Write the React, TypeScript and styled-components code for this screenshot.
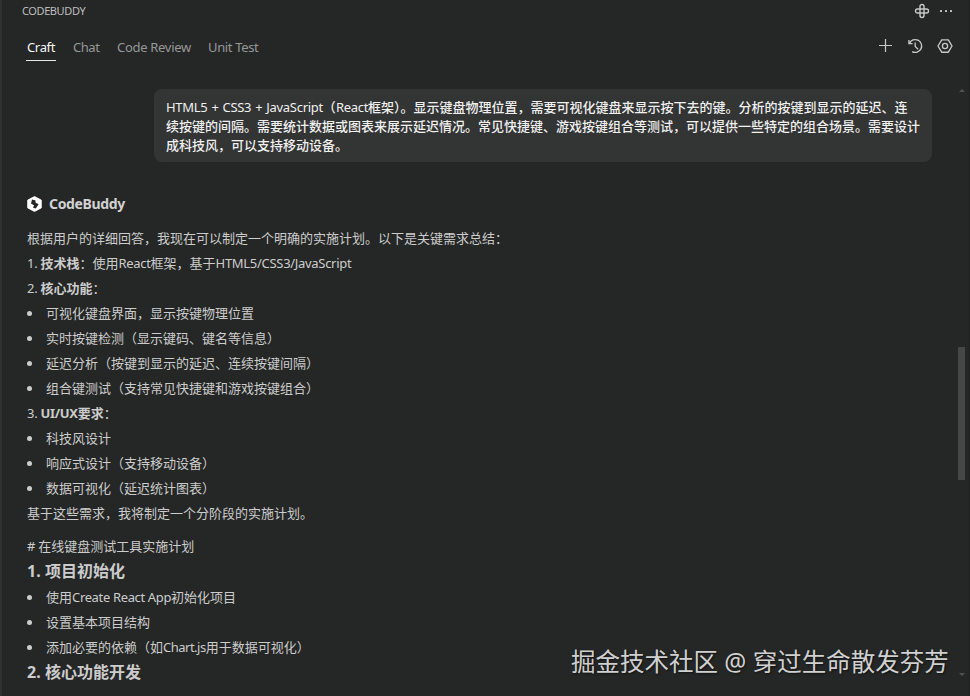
import React from "react";
import styled, { createGlobalStyle } from "styled-components";

const GlobalStyle = createGlobalStyle`
  * { box-sizing: border-box; }
  body { margin: 0; background: #252726; overflow: hidden; }
`;

const Panel = styled.div`
  position: relative;
  width: 970px;
  height: 696px;
  display: flex;
  flex-direction: column;
  overflow: hidden;
  background: #252726;
  border-left: 2px solid #303231;
  border-right: 1px solid #1e201f;
  color: #cccccc;
  font: 13px/25px "Noto Sans", "Noto Sans CJK SC", sans-serif;
  white-space: nowrap;
`;

const TitleBar = styled.header`
  height: 22px;
  display: flex;
  align-items: center;
  justify-content: space-between;
  padding: 0 16px 0 20px;
  font-size: 11px;
  line-height: 22px;
`;

const Title = styled.span`
  color: #bdbdbd;
  letter-spacing: -0.4px;
`;

const Actions = styled.div<{ $gap: number }>`
  display: flex;
  align-items: center;
  gap: ${(p) => p.$gap}px;
  color: #c8c8c8;
  svg { display: block; }
`;

const TabBar = styled.nav`
  height: 48px;
  display: flex;
  align-items: center;
  justify-content: space-between;
  padding: 0 16px 0 24px;
`;

const Tabs = styled.div`
  display: flex;
  gap: 16px;
  padding-top: 2px;
`;

const Tab = styled.span<{ $active?: boolean; $width: number; $track: number }>`
  width: ${(p) => p.$width}px;
  height: 27px;
  padding-left: 1px;
  line-height: 27px;
  letter-spacing: ${(p) => p.$track}px;
  color: ${(p) => (p.$active ? "#f4f4f4" : "#969797")};
  border-bottom: 1px solid ${(p) => (p.$active ? "#e8e8e8" : "transparent")};
`;

const Conversation = styled.main`
  flex: 1;
  display: flex;
  flex-direction: column;
  padding: 19px 37px 0 25px;
`;

const Bubble = styled.div`
  align-self: flex-end;
  width: 778px;
  height: 73px;
  padding: 9px 12px 7px;
  border-radius: 8px;
  background: #333434;
  color: #f0f0f0;
  font-weight: 500;
  line-height: 19px;
`;

const Author = styled.div`
  display: flex;
  align-items: center;
  gap: 7px;
  height: 24px;
  margin-top: 30px;
  color: #d2d2d2;
  font-size: 14px;
  font-weight: 700;
  line-height: 24px;
`;

const Name = styled.span`
  height: 24px;
  letter-spacing: -0.35px;
`;

const Answer = styled.section<{ $top: number }>`
  margin-top: ${(p) => p.$top}px;
`;

const Line = styled.p`
  margin: 0;
  height: 25px;
`;

const Heading = styled.h3`
  margin: 0 0 1px;
  height: 25px;
  font-size: 16px;
  font-weight: 700;
  line-height: 25px;
`;

const List = styled.ul`
  margin: 0;
  padding: 0;
  list-style: none;
`;

const Item = styled.li`
  height: 25px;
  display: flex;
  align-items: center;
  &::before {
    content: "";
    width: 5px;
    height: 5px;
    margin-right: 14px;
    border-radius: 50%;
    background: #cccccc;
  }
`;

const Latin = styled.span<{ $track?: number }>`
  letter-spacing: ${(p) => p.$track ?? -0.3}px;
`;

const MessageLatin = styled(Latin)`
  font-weight: 450;
  word-spacing: 0.9px;
`;

const ScrollThumb = styled.div`
  position: absolute;
  right: 4px;
  top: 347px;
  width: 7px;
  height: 133px;
  background: #454746;
`;

const ScrollArrow = styled.div<{ $top: number; $down?: boolean }>`
  position: absolute;
  right: 4px;
  top: ${(p) => p.$top}px;
  border: 3px solid transparent;
  ${(p) => (p.$down ? "border-top" : "border-bottom")}: 3px solid #505251;
  ${(p) => (p.$down ? "border-bottom" : "border-top")}-width: 0;
`;

const Watermark = styled.div`
  position: absolute;
  left: 569px;
  top: 645px;
  font-size: 24.5px;
  line-height: 34px;
  color: #d0d0d0;
  text-shadow: 1px 1px 2px #111;
`;

const CloverIcon = () => (
  <svg width="16" height="16" viewBox="0 0 16 16" fill="none" stroke="currentColor" strokeWidth="1.4">
    <path d="M6 6V3.5a2 2 0 0 1 4 0V6h2.5a2 2 0 0 1 0 4H10v2.5a2 2 0 0 1-4 0V10H3.5a2 2 0 0 1 0-4zM6 6h4v4H6z" />
  </svg>
);

const MoreIcon = () => (
  <svg width="14" height="16" viewBox="0 0 14 16" fill="currentColor">
    <rect x="1" y="7" width="2" height="2" rx=".6" />
    <rect x="6" y="7" width="2" height="2" rx=".6" />
    <rect x="11" y="7" width="2" height="2" rx=".6" />
  </svg>
);

const PlusIcon = () => (
  <svg width="16" height="16" viewBox="0 0 16 16" stroke="currentColor" strokeWidth="1.2">
    <path d="M2 7.5h13M8.5 1v13" />
  </svg>
);

const HistoryIcon = () => (
  <svg width="16" height="16" viewBox="0 0 16 16" fill="none" stroke="currentColor" strokeWidth="1.3">
    <path d="M1.9 2v3.6H5.6M2.4 5.4A6.4 6.4 0 1 1 5.2 13.6M8.2 4.5v4l2.9 2.7" />
  </svg>
);

const SettingsIcon = () => (
  <svg width="16" height="16" viewBox="0 0 16 16" fill="none" stroke="currentColor" strokeWidth="1.35">
    <path d="M4.7 1.8h6.6L15 8l-3.7 6.2H4.7L1 8z" strokeLinejoin="round" />
    <circle cx="8" cy="8" r="2.6" />
  </svg>
);

const BuddyLogo = () => (
  <svg width="15" height="16" viewBox="0 0 15 16">
    <path d="M7.5 .5 14.3 4.1v7.8l-6.8 3.6L.7 11.9V4.1z" fill="#fff" stroke="#fff" strokeWidth=".8" strokeLinejoin="round" />
    <path d="M5 3.6 8.6 4.4 8.4 6.6 11.6 8.2 8.8 12.6 5.8 11.4 7.2 9.6 4 7.4z" fill="#252726" />
  </svg>
);

export default function App() {
  return (
    <Panel>
      <GlobalStyle />
      <TitleBar>
        <Title>CODEBUDDY</Title>
        <Actions $gap={9}>
          <CloverIcon />
          <MoreIcon />
        </Actions>
      </TitleBar>
      <TabBar>
        <Tabs>
          <Tab $active $width={30} $track={-0.35}>Craft</Tab>
          <Tab $width={28} $track={-0.45}>Chat</Tab>
          <Tab $width={75} $track={-0.3}>Code Review</Tab>
          <Tab $width={52} $track={-0.35}>Unit Test</Tab>
        </Tabs>
        <Actions $gap={14}>
          <PlusIcon />
          <HistoryIcon />
          <SettingsIcon />
        </Actions>
      </TabBar>
      <Conversation>
        <Bubble>
          <MessageLatin>HTML5 + CSS3 + JavaScript</MessageLatin>（<MessageLatin>React</MessageLatin>框架）。显示键盘物理位置，需要可视化键盘来显示按下去的键。分析的按键到显示的延迟、连
          <br />
          续按键的间隔。需要统计数据或图表来展示延迟情况。常见快捷键、游戏按键组合等测试，可以提供一些特定的组合场景。需要设计
          <br />
          成科技风，可以支持移动设备。
        </Bubble>
        <Author>
          <BuddyLogo />
          <Name>CodeBuddy</Name>
        </Author>
        <Answer $top={10}>
          <Line>根据用户的详细回答，我现在可以制定一个明确的实施计划。以下是关键需求总结：</Line>
          <Line>
            <Latin>1. </Latin><b>技术栈</b>：使用<Latin>React</Latin>框架，基于<Latin>HTML5/CSS3/JavaScript</Latin>
          </Line>
          <Line><Latin>2. </Latin><b>核心功能</b>：</Line>
          <List>
            <Item>可视化键盘界面，显示按键物理位置</Item>
            <Item>实时按键检测（显示键码、键名等信息）</Item>
            <Item>延迟分析（按键到显示的延迟、连续按键间隔）</Item>
            <Item>组合键测试（支持常见快捷键和游戏按键组合）</Item>
          </List>
          <Line><Latin>3. </Latin><b><Latin>UI/UX</Latin>要求</b>：</Line>
          <List>
            <Item>科技风设计</Item>
            <Item>响应式设计（支持移动设备）</Item>
            <Item>数据可视化（延迟统计图表）</Item>
          </List>
          <Line>基于这些需求，我将制定一个分阶段的实施计划。</Line>
        </Answer>
        <Answer $top={8}>
          <Line><Latin># </Latin>在线键盘测试工具实施计划</Line>
          <Heading><Latin $track={0.05}>1. </Latin>项目初始化</Heading>
          <List>
            <Item>使用<Latin $track={-0.35}>Create React App</Latin>初始化项目</Item>
            <Item>设置基本项目结构</Item>
            <Item>添加必要的依赖（如<Latin $track={-0.5}>Chart.js</Latin>用于数据可视化）</Item>
          </List>
          <Heading><Latin $track={0.05}>2. </Latin>核心功能开发</Heading>
        </Answer>
      </Conversation>
      <ScrollArrow $top={89} />
      <ScrollThumb />
      <ScrollArrow $top={673} $down />
      <Watermark>掘金技术社区 @ 穿过生命散发芬芳</Watermark>
    </Panel>
  );
}
